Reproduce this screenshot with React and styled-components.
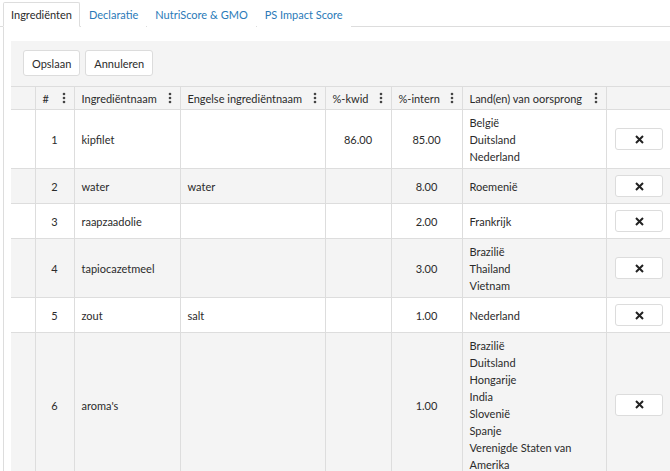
import React from "react";
import styled, { createGlobalStyle } from "styled-components";

const GlobalStyle = createGlobalStyle`
  body {
    margin: 0;
    overflow: hidden;
    background: #ffffff;
    font-family: "Lato", "Liberation Sans", sans-serif;
    font-size: 11px;
    color: #2b2b2b;
  }
`;

const rows = [
  { nr: 1, name: "kipfilet", en: "", kwid: "86.00", intern: "85.00", lands: ["België", "Duitsland", "Nederland"] },
  { nr: 2, name: "water", en: "water", kwid: "", intern: "8.00", lands: ["Roemenië"] },
  { nr: 3, name: "raapzaadolie", en: "", kwid: "", intern: "2.00", lands: ["Frankrijk"] },
  { nr: 4, name: "tapiocazetmeel", en: "", kwid: "", intern: "3.00", lands: ["Brazilië", "Thailand", "Vietnam"] },
  { nr: 5, name: "zout", en: "salt", kwid: "", intern: "1.00", lands: ["Nederland"] },
  {
    nr: 6,
    name: "aroma's",
    en: "",
    kwid: "",
    intern: "1.00",
    lands: ["Brazilië", "Duitsland", "Hongarije", "India", "Slovenië", "Spanje", "Verenigde Staten van Amerika"],
  },
];

const columns = [
  { key: "sel", label: "", width: 24 },
  { key: "nr", label: "#", width: 39 },
  { key: "name", label: "Ingrediëntnaam", width: 106 },
  { key: "en", label: "Engelse ingrediëntnaam", width: 145 },
  { key: "kwid", label: "%-kwid", width: 66 },
  { key: "intern", label: "%-intern", width: 71 },
  { key: "land", label: "Land(en) van oorsprong", width: 144 },
  { key: "action", label: "", width: 66 },
];

function Kebab() {
  return (
    <svg width="4" height="12" viewBox="0 0 4 12">
      <circle cx="2" cy="2" r="1.3" fill="#444" />
      <circle cx="2" cy="6" r="1.3" fill="#444" />
      <circle cx="2" cy="10" r="1.3" fill="#444" />
    </svg>
  );
}

function Cross() {
  return (
    <svg width="9" height="9" viewBox="0 0 9 9">
      <path d="M1 1 L8 8 M8 1 L1 8" stroke="#222" strokeWidth="2" />
    </svg>
  );
}

export default function App() {
  return (
    <>
      <GlobalStyle />
      <TabBar>
        <Tab $active>Ingrediënten</Tab>
        <Tab>Declaratie</Tab>
        <Tab>NutriScore &amp; GMO</Tab>
        <Tab>PS Impact Score</Tab>
      </TabBar>
      <TabContent>
        <Panel>
          <Toolbar>
            <Button>Opslaan</Button>
            <Button>Annuleren</Button>
          </Toolbar>
          <Table>
            <colgroup>
              {columns.map((c) => (
                <col key={c.key} style={{ width: c.width }} />
              ))}
            </colgroup>
            <thead>
              <tr>
                {columns.map((c) => (
                  <Th key={c.key}>
                    {c.label && (
                      <HeadInner>
                        <span>{c.label}</span>
                        <Kebab />
                      </HeadInner>
                    )}
                  </Th>
                ))}
              </tr>
            </thead>
            <tbody>
              {rows.map((r, i) => (
                <Row key={r.nr} $striped={i % 2 === 1}>
                  <Td />
                  <Td $center>{r.nr}</Td>
                  <Td>{r.name}</Td>
                  <Td>{r.en}</Td>
                  <Td $center>{r.kwid}</Td>
                  <Td $center>{r.intern}</Td>
                  <Td>
                    {r.lands.map((l) => (
                      <div key={l}>{l}</div>
                    ))}
                  </Td>
                  <Td $center>
                    <ActionCell>
                      <DeleteButton>
                        <Cross />
                      </DeleteButton>
                    </ActionCell>
                  </Td>
                </Row>
              ))}
            </tbody>
          </Table>
        </Panel>
      </TabContent>
    </>
  );
}

const TabBar = styled.div`
  display: flex;
  padding: 2px 0 0 3px;
  border-bottom: 1px solid #dddddd;
`;

const Tab = styled.div`
  height: 23px;
  line-height: 23px;
  padding: 0 7px;
  margin-right: 1px;
  margin-bottom: -1px;
  border: 1px solid ${(p) => (p.$active ? "#dddddd" : "transparent")};
  border-bottom-color: ${(p) => (p.$active ? "#ffffff" : "transparent")};
  background: #ffffff;
  color: ${(p) => (p.$active ? "#2b2b2b" : "#2a7ab8")};
  border-radius: 2px 2px 0 0;
  cursor: pointer;
`;

const TabContent = styled.div`
  border-left: 1px solid #dddddd;
  margin-left: 3px;
  padding: 14px 0 0 7px;
  height: 460px;
`;

const Panel = styled.div`
  background: #f4f4f4;
  width: 700px;
`;

const Toolbar = styled.div`
  display: flex;
  gap: 5px;
  padding: 9px 12px 10px;
`;

const Button = styled.button`
  height: 26px;
  padding: 0 8px;
  font-family: inherit;
  font-size: 11px;
  color: #2b2b2b;
  background: #ffffff;
  border: 1px solid #dcdcdc;
  border-radius: 3px;
`;

const Table = styled.table`
  border-collapse: collapse;
  table-layout: fixed;
  width: 661px;
  border-top: 1px solid #dddddd;
`;

const Th = styled.th`
  height: 22px;
  padding: 0 8px 0 7px;
  font-weight: normal;
  text-align: left;
  border-right: 1px solid #dddddd;
  border-bottom: 1px solid #dddddd;
  &:last-child {
    border-right: none;
  }
`;

const HeadInner = styled.div`
  display: flex;
  align-items: center;
  justify-content: space-between;
  white-space: nowrap;
`;

const Row = styled.tr`
  background: ${(p) => (p.$striped ? "#f4f4f4" : "#ffffff")};
`;

const Td = styled.td`
  padding: 4px 7px 3px;
  line-height: 17px;
  vertical-align: middle;
  text-align: ${(p) => (p.$center ? "center" : "left")};
  border-right: 1px solid #dddddd;
  border-bottom: 1px solid #dddddd;
  &:last-child {
    border-right: none;
  }
`;

const ActionCell = styled.div`
  display: flex;
  justify-content: center;
  padding: 2px 0 3px;
`;

const DeleteButton = styled.button`
  display: flex;
  align-items: center;
  justify-content: center;
  width: 48px;
  height: 22px;
  padding: 0;
  background: #ffffff;
  border: 1px solid #dcdcdc;
  border-radius: 3px;
`;
